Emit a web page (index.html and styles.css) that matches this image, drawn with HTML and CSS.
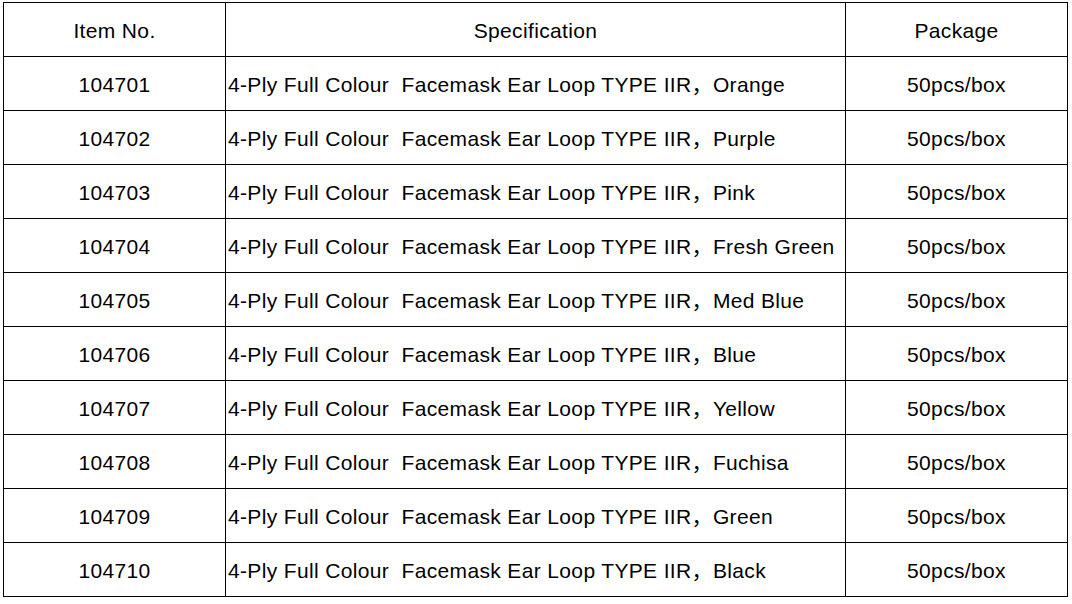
FILE: index.html
```html
<!DOCTYPE html>
<html>
<head>
<meta charset="utf-8">
<link rel="stylesheet" href="styles.css">
</head>
<body>
<table class="spec-table">
  <colgroup>
    <col class="col-item">
    <col class="col-spec">
    <col class="col-pack">
  </colgroup>
  <thead>
    <tr><th>Item No.</th><th>Specification</th><th>Package</th></tr>
  </thead>
  <tbody>
    <tr><td>104701</td><td class="spec">4-Ply Full Colour  Facemask Ear Loop TYPE IIR，Orange</td><td>50pcs/box</td></tr>
    <tr><td>104702</td><td class="spec">4-Ply Full Colour  Facemask Ear Loop TYPE IIR，Purple</td><td>50pcs/box</td></tr>
    <tr><td>104703</td><td class="spec">4-Ply Full Colour  Facemask Ear Loop TYPE IIR，Pink</td><td>50pcs/box</td></tr>
    <tr><td>104704</td><td class="spec">4-Ply Full Colour  Facemask Ear Loop TYPE IIR，Fresh Green</td><td>50pcs/box</td></tr>
    <tr><td>104705</td><td class="spec">4-Ply Full Colour  Facemask Ear Loop TYPE IIR，Med Blue</td><td>50pcs/box</td></tr>
    <tr><td>104706</td><td class="spec">4-Ply Full Colour  Facemask Ear Loop TYPE IIR，Blue</td><td>50pcs/box</td></tr>
    <tr><td>104707</td><td class="spec">4-Ply Full Colour  Facemask Ear Loop TYPE IIR，Yellow</td><td>50pcs/box</td></tr>
    <tr><td>104708</td><td class="spec">4-Ply Full Colour  Facemask Ear Loop TYPE IIR，Fuchisa</td><td>50pcs/box</td></tr>
    <tr><td>104709</td><td class="spec">4-Ply Full Colour  Facemask Ear Loop TYPE IIR，Green</td><td>50pcs/box</td></tr>
    <tr><td>104710</td><td class="spec">4-Ply Full Colour  Facemask Ear Loop TYPE IIR，Black</td><td>50pcs/box</td></tr>
  </tbody>
</table>
</body>
</html>
```
FILE: styles.css
```css
html, body {
  margin: 0;
  background: #fff;
}
body {
  padding: 2px 0 0 3px;
  font-family: "Liberation Sans", Arial, "Noto Sans CJK SC", sans-serif;
  font-size: 21px;
  letter-spacing: 0.35px;
  color: #000;
}
.spec-table {
  border-collapse: collapse;
  table-layout: fixed;
  width: 1064px;
}
.col-item { width: 222px; }
.col-spec { width: 620px; }
.col-pack { width: 222px; }
.spec-table th,
.spec-table td {
  border: 1px solid #000;
  height: 54px;
  padding: 2px 0 0 0;
  text-align: center;
  vertical-align: middle;
  font-weight: normal;
  line-height: 1;
  box-sizing: border-box;
}
.spec-table td.spec {
  text-align: left;
  padding-left: 2px;
  white-space: pre;
}
```
